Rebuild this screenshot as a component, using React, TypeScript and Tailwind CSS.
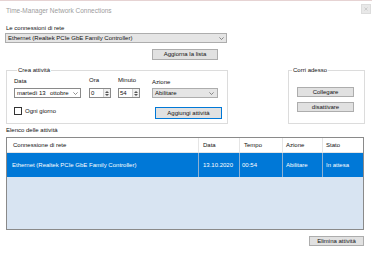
import React from "react";

function Chevron() {
  return (
    <svg width="5" height="3" viewBox="0 0 5 3" className="shrink-0">
      <polyline points="0.4,0.4 2.5,2.5 4.6,0.4" fill="none" stroke="#606060" strokeWidth="0.7" />
    </svg>
  );
}

function Spin({ value }: { value: string }) {
  return (
    <div className="w-[22px] h-[10px] border border-[#8a8a8a] bg-white flex items-stretch">
      <span className="flex-1 pl-[1px] leading-[8px]">{value}</span>
      <div className="w-[7px] flex flex-col items-center justify-center gap-[1px] bg-[#f0f0f0] border-l border-[#d0d0d0]">
        <svg width="4" height="2" viewBox="0 0 4 2"><polygon points="0,2 2,0 4,2" fill="#555" /></svg>
        <svg width="4" height="2" viewBox="0 0 4 2"><polygon points="0,0 4,0 2,2" fill="#555" /></svg>
      </div>
    </div>
  );
}

function Btn({ children, className = "" }: { children: React.ReactNode; className?: string }) {
  return (
    <div className={"h-[10px] bg-[#e1e1e1] border border-[#adadad] flex items-center justify-center leading-[7px] " + className}>
      {children}
    </div>
  );
}

export default function App() {
  return (
    <div className="w-[372px] h-[253px] bg-white overflow-hidden font-['Liberation_Sans',Arial,sans-serif] text-[6px] leading-[7px] text-[#111] border-t border-[#e6d3d3] flex flex-col">
      {/* title bar */}
      <div className="h-[18px] shrink-0 flex items-start justify-between pl-[6px] pr-[1px]">
        <span className="mt-[6px] text-[6.5px] text-[#9c9c9c]">Time-Manager Network Connections</span>
        <div className="mt-[3px] w-[10px] h-[10px] bg-[#e8e8e8] border border-[#dcdcdc] flex items-center justify-center">
          <svg width="4" height="4" viewBox="0 0 4 4">
            <path d="M0.5 0.5 L3.5 3.5 M3.5 0.5 L0.5 3.5" stroke="#b8b8b8" strokeWidth="0.6" />
          </svg>
        </div>
      </div>

      <div className="flex flex-col pl-[5px]">
        <span className="mt-[6px] h-[7px] pl-[1px]">Le connessioni di rete</span>
        <div className="mt-[1px] w-[222px] h-[10px] bg-[#e5e5e5] border border-[#adadad] flex items-center justify-between pl-[2px] pr-[2px]">
          <span>Ethernet (Realtek PCIe GbE Family Controller)</span>
          <Chevron />
        </div>
        <Btn className="mt-[6px] ml-[147px] w-[66px] h-[11px]">Aggiorna la lista</Btn>

        {/* group boxes */}
        <div className="mt-[7px] flex items-start">
          <fieldset className="ml-[1px] w-[222px] h-[57px] border border-[#dcdcdc] pl-[7px]">
            <legend className="ml-[3px] px-[1px] leading-[7px]">Crea attività</legend>
            <div className="mt-[4px] flex h-[7px]">
              <span className="w-[75px]">Data</span>
              <span className="w-[29px] -mt-[1px]">Ora</span>
              <span className="w-[34px] -mt-[1px]">Minuto</span>
              <span className="mt-[1px]">Azione</span>
            </div>
            <div className="mt-[3px] flex items-start">
              <div className="w-[67px] h-[10px] bg-white border border-[#8a8a8a] flex items-center pl-[2px] pr-[2px]">
                <span className="w-[22px]">martedì</span>
                <span className="w-[11px]">13</span>
                <span className="flex-1">ottobre</span>
                <Chevron />
              </div>
              <div className="ml-[8px]"><Spin value="0" /></div>
              <div className="ml-[7px]"><Spin value="54" /></div>
              <div className="ml-[12px] w-[66px] h-[10px] bg-[#e5e5e5] border border-[#adadad] flex items-center justify-between pl-[2px] pr-[3px]">
                <span>Abilitare</span>
                <Chevron />
              </div>
            </div>
            <div className="mt-[9px] flex items-start">
              <div className="w-[8px] h-[8px] border border-[#333] bg-white" />
              <span className="ml-[3px] mt-[1px]">Ogni giorno</span>
              <div className="ml-[99px] w-[67px] h-[12px] bg-[#e1e1e1] border border-[#0078d7] flex items-center justify-center">
                <div className="w-[63px] h-[8px] border border-[#e1e1e1] flex items-center justify-center">Aggiungi attività</div>
              </div>
            </div>
          </fieldset>

          <fieldset className="ml-[60px] w-[77px] h-[57px] border border-[#dcdcdc]">
            <legend className="ml-[3px] px-[1px] leading-[7px]">Corri adesso</legend>
            <Btn className="mt-[13px] ml-[8px] w-[57px]">Collegare</Btn>
            <Btn className="mt-[5px] ml-[8px] w-[57px]">disattivare</Btn>
          </fieldset>
        </div>

        <span className="mt-[3px] h-[7px] pl-[1px]">Elenco delle attività</span>

        {/* list view */}
        <div className="mt-[3px] ml-[1px] w-[358px] h-[93px] border border-[#8a8a8a] bg-[#d8e4f2] flex flex-col">
          <div className="h-[15px] bg-white grid grid-cols-[192px_41px_43px_40px_1fr] border-b border-[#e5e5e5]">
            <div className="pl-[6px] flex items-center border-r border-[#e5e5e5]">Connessione di rete</div>
            <div className="pl-[4px] flex items-center border-r border-[#e5e5e5]">Data</div>
            <div className="pl-[4px] flex items-center border-r border-[#e5e5e5]">Tempo</div>
            <div className="pl-[3px] flex items-center border-r border-[#e5e5e5]">Azione</div>
            <div className="pl-[3px] flex items-center">Stato</div>
          </div>
          <div className="h-[24px] bg-[#0078d7] text-white grid grid-cols-[192px_41px_43px_40px_1fr]">
            <div className="pl-[5px] flex items-center border-r border-[#8fb0d2]">Ethernet (Realtek PCIe GbE Family Controller)</div>
            <div className="pl-[4px] flex items-center border-r border-[#8fb0d2]">13.10.2020</div>
            <div className="pl-[2px] flex items-center border-r border-[#8fb0d2]">00:54</div>
            <div className="pl-[3px] flex items-center border-r border-[#8fb0d2]">Abilitare</div>
            <div className="pl-[3px] flex items-center">In attesa</div>
          </div>
        </div>

        <Btn className="mt-[6px] ml-[304px] w-[55px]">Elimina attività</Btn>
      </div>
    </div>
  );
}
